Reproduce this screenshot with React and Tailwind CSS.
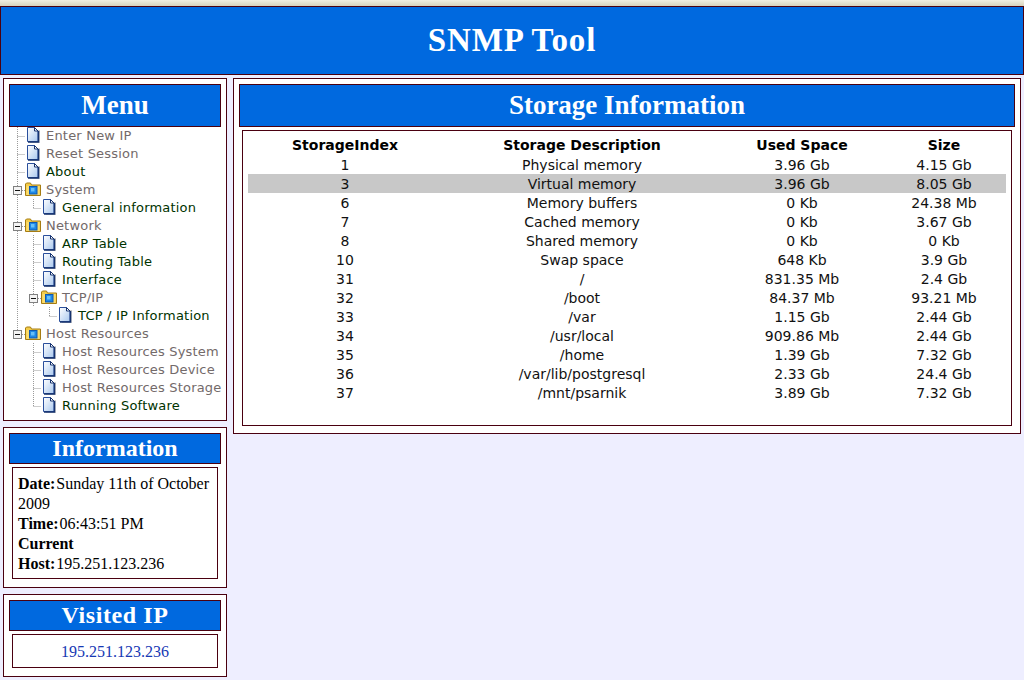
const rows = [
  ['1', 'Physical memory', '3.96 Gb', '4.15 Gb'],
  ['3', 'Virtual memory', '3.96 Gb', '8.05 Gb'],
  ['6', 'Memory buffers', '0 Kb', '24.38 Mb'],
  ['7', 'Cached memory', '0 Kb', '3.67 Gb'],
  ['8', 'Shared memory', '0 Kb', '0 Kb'],
  ['10', 'Swap space', '648 Kb', '3.9 Gb'],
  ['31', '/', '831.35 Mb', '2.4 Gb'],
  ['32', '/boot', '84.37 Mb', '93.21 Mb'],
  ['33', '/var', '1.15 Gb', '2.44 Gb'],
  ['34', '/usr/local', '909.86 Mb', '2.44 Gb'],
  ['35', '/home', '1.39 Gb', '7.32 Gb'],
  ['36', '/var/lib/postgresql', '2.33 Gb', '24.4 Gb'],
  ['37', '/mnt/psarnik', '3.89 Gb', '7.32 Gb'],
]

// guides: one letter per tree column. l = line, t = tee, e = end, b = blank, m = minus box
const menu = [
  { guides: 't', label: 'Enter New IP', muted: true },
  { guides: 't', label: 'Reset Session', muted: true },
  { guides: 't', label: 'About' },
  { guides: 'm', label: 'System', folder: true, muted: true },
  { guides: 'le', label: 'General information' },
  { guides: 'm', label: 'Network', folder: true, muted: true },
  { guides: 'lt', label: 'ARP Table' },
  { guides: 'lt', label: 'Routing Table' },
  { guides: 'lt', label: 'Interface' },
  { guides: 'lm', label: 'TCP/IP', folder: true, muted: true },
  { guides: 'lbe', label: 'TCP / IP Information' },
  { guides: 'M', label: 'Host Resources', folder: true, muted: true },
  { guides: 'bt', label: 'Host Resources System', muted: true },
  { guides: 'bt', label: 'Host Resources Device', muted: true },
  { guides: 'bt', label: 'Host Resources Storage', muted: true },
  { guides: 'be', label: 'Running Software' },
]

function Guide({ kind }) {
  const dots = { stroke: '#9a9a9a', strokeWidth: 1, strokeDasharray: '1 1' }
  return (
    <svg width="16" height="18" viewBox="0 0 16 18" className="shrink-0">
      {(kind === 'l' || kind === 't') && <line x1="8.5" y1="0" x2="8.5" y2="18" {...dots} />}
      {kind === 'e' && <line x1="8.5" y1="0" x2="8.5" y2="9.5" {...dots} />}
      {(kind === 't' || kind === 'e') && <line x1="8.5" y1="9.5" x2="17" y2="9.5" {...dots} />}
      {(kind === 'm' || kind === 'M') && (
        <>
          <line x1="8.5" y1="0" x2="8.5" y2="5" {...dots} />
          {kind === 'm' && <line x1="8.5" y1="14" x2="8.5" y2="18" {...dots} />}
          <line x1="13" y1="9.5" x2="16" y2="9.5" {...dots} />
          <rect x="4.5" y="5.500" width="8" height="8" fill="#f4f4f4" stroke="#808080" />
          <line x1="6" y1="9.5" x2="11" y2="9.5" stroke="#111" />
        </>
      )}
    </svg>
  )
}

function PageIcon() {
  return (
    <svg width="16" height="18" viewBox="0 0 16 18" className="shrink-0">
      <defs>
        <linearGradient id="pageFill" x1="0" y1="0" x2="1" y2="1">
          <stop offset="0" stopColor="#ffffff" />
          <stop offset="1" stopColor="#a9c8ee" />
        </linearGradient>
      </defs>
      <path d="M5 3h10v13H5z" fill="#cfcfcf" />
      <path d="M2.500 0.500h7l3.500 3.500v10.500h-10.500z" fill="url(#pageFill)" stroke="#2a4f9c" />
      <path d="M9.500 0.500v3.500h3.500z" fill="#ffffff" stroke="#16336f" />
      <path d="M3 15h10.500V4" fill="none" stroke="#16336f" strokeWidth="1.500" />
    </svg>
  )
}

function FolderIcon() {
  return (
    <svg width="16" height="18" viewBox="0 0 16 18" className="shrink-0">
      <path d="M0.500 4v-1l1-1h4l1 2h9v10.500h-15z" fill="#f3cc4a" stroke="#a67c12" />
      <rect x="1.500" y="5" width="13" height="9" fill="#fbdc6c" />
      <rect x="4.500" y="5.500" width="7.500" height="7.500" fill="#1f88e6" stroke="#0f58b0" />
      <rect x="6" y="7" width="3.500" height="3.500" fill="#67bff7" />
    </svg>
  )
}

function TreeRow({ item }) {
  return (
    <div className="flex h-[18px] items-center">
      {item.guides.split('').map((kind, i) => (
        <Guide key={i} kind={kind} />
      ))}
      {item.folder ? <FolderIcon /> : <PageIcon />}
      <span className={`ml-[5px] whitespace-nowrap text-[13px] tracking-[0.2px] ${item.muted ? 'text-[#736a6a]' : 'text-[#003300]'}`}>
        {item.label}
      </span>
    </div>
  )
}

function PanelTitle({ children, className }) {
  return (
    <div className={`flex items-center justify-center border border-[#4a0010] bg-[#0069df] font-bold text-white ${className}`}>
      {children}
    </div>
  )
}

export default function App() {
  return (
    <div className="h-[680px] overflow-hidden bg-[#eeeeff] font-['Liberation_Serif',serif]">
      <div className="h-[6px] bg-gradient-to-b from-[#f1efe2] to-[#d8d4bc]" />
      <div className="flex h-[69px] items-center justify-center border border-[#4a0010] bg-[#0069df] text-[33px] font-bold tracking-[0.9px] text-white">
        SNMP Tool
      </div>

      <div className="flex items-start gap-[6px] pt-[3px] pl-[3px]">
        <div className="flex w-[224px] shrink-0 flex-col gap-[6px]">
          <div className="h-[343px] border border-[#4a0010] bg-white px-[5px] pt-[5px]">
            <PanelTitle className="h-[43px] text-[27px]">Menu</PanelTitle>
            <div className="font-['DejaVu_Sans',sans-serif]">
              {menu.map(item => (
                <TreeRow key={item.label} item={item} />
              ))}
            </div>
          </div>

          <div className="h-[161px] border border-[#4a0010] bg-white px-[5px] pt-[5px]">
            <PanelTitle className="h-[31px] pb-[2px] text-[24px]">Information</PanelTitle>
            <div className="mx-[3px] mt-[3px] h-[112px] border border-[#4a0010] px-[5px] pt-[6px] text-[16px] leading-[20px] text-black">
              <b className="mr-[1px]">Date:</b>Sunday 11th of October 2009
              <br />
              <b className="mr-[1px]">Time:</b>06:43:51 PM
              <br />
              <b className="mr-[1px]">Current Host:</b>195.251.123.236
            </div>
          </div>

          <div className="h-[83px] border border-[#4a0010] bg-white px-[5px] pt-[5px]">
            <PanelTitle className="h-[31px] pb-[2px] text-[24px] tracking-[0.6px]">Visited IP</PanelTitle>
            <div className="mx-[3px] mt-[3px] flex h-[34px] items-center justify-center border border-[#4a0010] pt-[2px] text-[16px] text-[#1638b4]">
              195.251.123.236
            </div>
          </div>
        </div>

        <div className="h-[356px] w-[788px] border border-[#4a0010] bg-white px-[5px] pt-[5px]">
          <PanelTitle className="h-[43px] text-[27px]">Storage Information</PanelTitle>
          <div className="mx-[3px] mt-[3px] h-[296px] border border-[#4a0010] px-[5px] pt-[5px] font-['DejaVu_Sans',sans-serif] text-[14px] text-[#111]">
            <table className="w-[758px] table-fixed border-collapse text-center">
              <colgroup>
                <col className="w-[194px]" />
                <col className="w-[280px]" />
                <col className="w-[160px]" />
                <col className="w-[124px]" />
              </colgroup>
              <thead>
                <tr className="h-[19px] font-bold text-black">
                  <th className="p-0 leading-[19px]">StorageIndex</th>
                  <th className="p-0 leading-[19px]">Storage Description</th>
                  <th className="p-0 leading-[19px]">Used Space</th>
                  <th className="p-0 leading-[19px]">Size</th>
                </tr>
              </thead>
              <tbody>
                {rows.map(row => (
                  <tr key={row[0]} className={`h-[19px] ${row[0] === '3' ? 'bg-[#c8c8c8]' : ''}`}>
                    {row.map((cell, i) => (
                      <td key={i} className="p-0 pt-[1px] leading-[18px]">{cell}</td>
                    ))}
                  </tr>
                ))}
              </tbody>
            </table>
          </div>
        </div>
      </div>
    </div>
  )
}
